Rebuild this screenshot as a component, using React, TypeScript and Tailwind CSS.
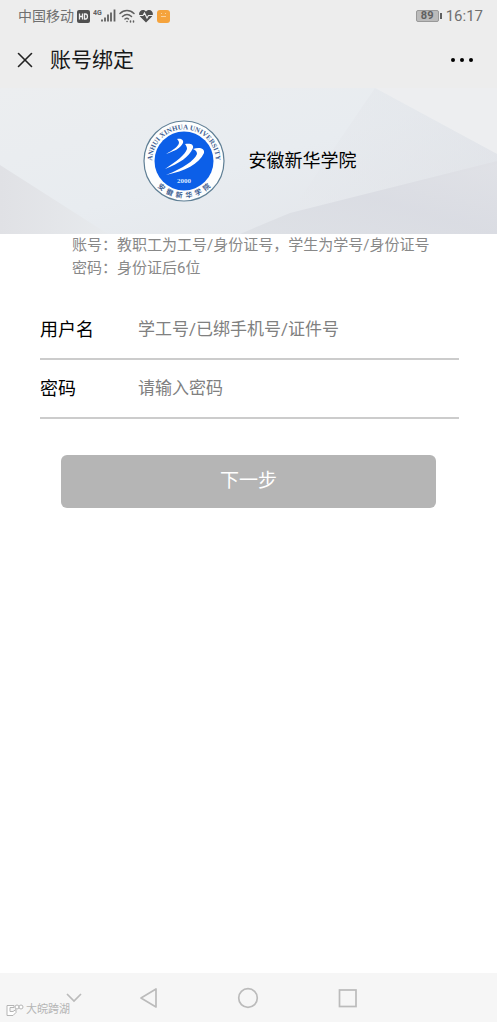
import React from 'react';
import { X } from 'lucide-react';

const fields = [
  { id: 'username', label: '用户名', type: 'text', placeholder: '学工号/已绑手机号/证件号' },
  { id: 'password', label: '密码', type: 'password', placeholder: '请输入密码' },
];

const StatusBar: React.FC = () => (
  <div className="flex h-8 items-center justify-between pl-[18px] pr-[14px] text-[#707070]">
    <div className="flex items-center gap-[3px]">
      <span className="text-sm">中国移动</span>
      <svg className="h-[13px] w-[13px]" viewBox="0 0 13 13">
        <rect width="13" height="13" rx="2" fill="#505050" />
        <path d="M2.5 3.5v6M5.5 3.5v6M2.5 6.5h3M7.5 4v5h1c2.6 0 2.6-5 0-5z" fill="none" stroke="#eee" strokeWidth="1.3" />
      </svg>
      <svg className="h-4 w-[23px]" viewBox="0 0 23 16">
        <text x="0" y="7" fontSize="7" fontWeight="700" fill="#606060">4G</text>
        <path d="M9 13.5v-2M12 13.5v-4M15 13.5v-7M18 13.5v-9M21.5 13.5v-12" stroke="#606060" strokeWidth="1.8" />
      </svg>
      <svg className="h-4 w-4" viewBox="0 0 16 16" fill="none" stroke="#606060" strokeWidth="1.5" strokeLinecap="round">
        <path d="M1 5.5c4-4 10-4 14 0M3.5 8.5c3-2.7 6-2.7 9 0M6 11c1.3-1 2.5-1 3.5 0" />
        <path d="M8 13.5h.1M11.5 13v1M14.5 13v1" />
      </svg>
      <svg className="h-4 w-4" viewBox="0 0 16 16">
        <path d="M8 14.5L2 8.5C-1 4.5 4-.5 8 3.500c4-4 9 1 6 5z" fill="#505050" />
        <path d="M1 7.500h4l1.500-2.500L9 10l1.500-2.500H15" fill="none" stroke="#eee" strokeWidth="1.2" />
      </svg>
      <svg className="h-[13px] w-[13px]" viewBox="0 0 13 13">
        <rect width="13" height="13" rx="3" fill="#f5a33c" />
        <path d="M4 3.500h1M8 3.500h1M4 6.500h5" stroke="#fbd19a" fill="none" />
      </svg>
    </div>
    <div className="flex items-center gap-1">
      <div className="flex items-center gap-px">
        <span className="flex h-3 w-[23px] items-center justify-center rounded-xs border border-[#999999] bg-[#bbbbbb] text-[11px] font-bold text-[#606060]">89</span>
        <span className="h-1.5 w-0.5 bg-[#606060]" />
      </div>
      <span className="text-[15px]">16:17</span>
    </div>
  </div>
);

const Logo: React.FC = () => (
  <svg className="h-[82px] w-[82px]" viewBox="0 0 82 82" role="img" aria-label="安徽新华学院">
    <defs>
      <path id="top-arc" d="M10.5 51a32 32 0 1 1 61 0" />
      <path id="bottom-arc" d="M4 41a37 37 0 0 0 74 0" />
    </defs>
    <circle cx="41" cy="41" r="40" fill="#fdfefe" stroke="#5f7f95" strokeWidth="1.2" />
    <circle cx="41" cy="41" r="29.5" fill="#0c5fe8" />
    <text fontFamily="Liberation Serif, serif" fontSize="7" fontWeight="700" fill="#3f5f91">
      <textPath href="#top-arc" startOffset="50%" textAnchor="middle">ANHUI XINHUA UNIVERSITY</textPath>
    </text>
    <text fontSize="7" fontWeight="700" fill="#3f5f91" className="whitespace-pre">
      <textPath href="#bottom-arc" startOffset="50%" textAnchor="middle">安  徽  新  华  学  院</textPath>
    </text>
    <path
      d="M34 19c4-1 7 1 6 4-3 6-9 8-17 11 7-4 12-7 13-11 0-2-1-3-2-4zM42 24c5-1 9 0 8 4-4 9-13 15-28 21 12-8 20-14 22-20 0-2-1-4-2-5zM50 29c6-2 12-1 11 4-5 11-19 18-38 22 17-7 28-14 31-21 0-3-2-4-4-5z"
      fill="#fff"
    />
    <text x="41" y="63" textAnchor="middle" fontFamily="Liberation Serif, serif" fontSize="7" fontWeight="700" fill="#dbe9ff">2000</text>
  </svg>
);

const Banner: React.FC = () => (
  <div className="relative h-[146px] overflow-hidden bg-[#e8ebef]">
    <svg className="absolute inset-0 h-full w-full" viewBox="0 0 497 146" preserveAspectRatio="none">
      <defs>
        <linearGradient id="base" x1="0" y1="0" x2="1" y2="1">
          <stop offset="0" stopColor="#eceef0" />
          <stop offset="0.5" stopColor="#e8ecf0" />
          <stop offset="1" stopColor="#e2e4e9" />
        </linearGradient>
        <linearGradient id="left" x1="0" y1="0" x2="1" y2="0">
          <stop offset="0" stopColor="#e0e1e5" />
          <stop offset="1" stopColor="#e7eaed" />
        </linearGradient>
        <linearGradient id="right" x1="1" y1="0" x2="0" y2="0">
          <stop offset="0" stopColor="#dfe1e6" />
          <stop offset="1" stopColor="#e6e9ed" />
        </linearGradient>
        <linearGradient id="corner" x1="0" y1="1" x2="1" y2="0">
          <stop offset="0" stopColor="#dcdfe4" />
          <stop offset="0.5" stopColor="#d8dae1" />
          <stop offset="1" stopColor="#dfe0e5" />
        </linearGradient>
      </defs>
      <path d="M0 0h497v146H0z" fill="url(#base)" />
      <path d="M0 77L108 146H0z" fill="url(#left)" />
      <path d="M375 0h122v66z" fill="#edeef0" />
      <path d="M375 0L497 66v10L290 125z" fill="url(#right)" opacity="0.5" />
      <path d="M497 73L290 125 240 146h257z" fill="url(#corner)" opacity="0.8" />
    </svg>
    <div className="relative flex h-full items-center justify-center gap-6 pl-0.5">
      <Logo />
      <h2 className="text-lg text-black">安徽新华学院</h2>
    </div>
  </div>
);

const NavBar: React.FC = () => (
  <nav className="relative grid h-[49px] grid-cols-5 bg-[#f6f6f6] text-[#bbbbbb]">
    <button aria-label="收起" className="flex items-center justify-end pr-3.5">
      <svg className="h-[22px] w-[22px]" viewBox="0 0 22 22" fill="none" stroke="currentColor" strokeWidth="1.7">
        <path d="M4 7l7 7 7-7" />
      </svg>
    </button>
    <button aria-label="返回" className="flex items-center justify-center">
      <svg className="h-[22px] w-[22px]" viewBox="0 0 22 22" fill="none" stroke="currentColor" strokeWidth="1.7" strokeLinejoin="round">
        <path d="M18 2v18L3 11z" />
      </svg>
    </button>
    <button aria-label="主页" className="flex items-center justify-center">
      <svg className="h-[22px] w-[22px]" viewBox="0 0 22 22" fill="none" stroke="currentColor" strokeWidth="1.7">
        <circle cx="11" cy="11" r="9.3" />
      </svg>
    </button>
    <button aria-label="最近" className="flex items-center justify-center">
      <svg className="h-[22px] w-[22px]" viewBox="0 0 22 22" fill="none" stroke="currentColor" strokeWidth="1.7">
        <rect x="2.500" y="3" width="16.500" height="16.500" />
      </svg>
    </button>
    <div className="absolute bottom-1.5 left-1.5 flex items-center gap-0.5">
      <svg className="h-3 w-[18px]" viewBox="0 0 18 12" fill="#fff" stroke="#b5b5b5">
        <path d="M1 1.500h7v2H4v4h3l3-2v3l-3 3H1z" />
        <circle cx="11" cy="3" r="2" />
        <circle cx="15" cy="3" r="2" />
      </svg>
      <span className="text-[11px] leading-3 text-[#b5b5b5]">大皖跨湖</span>
    </div>
  </nav>
);

export default function App() {
  return (
    <div className="flex min-h-screen flex-col bg-white font-['Roboto','Noto_Sans_CJK_SC',sans-serif]">
      <header className="bg-[#ededed]">
        <StatusBar />
        <div className="flex h-14 items-center pl-3 pr-6">
          <button aria-label="关闭">
            <X className="h-[26px] w-[26px] text-[#222222]" strokeWidth={1.5} />
          </button>
          <h1 className="ml-3 flex-1 pt-0.5 text-[21px] text-[#181818]">账号绑定</h1>
          <button aria-label="更多" className="flex gap-[5px]">
            <span className="h-1 w-1 rounded-full bg-black" />
            <span className="h-1 w-1 rounded-full bg-black" />
            <span className="h-1 w-1 rounded-full bg-black" />
          </button>
        </div>
      </header>
      <Banner />
      <main className="flex-1">
        <div className="pl-[72px] text-[15px] leading-[23px] text-[#888888]">
          <p>账号：教职工为工号/身份证号，学生为学号/身份证号</p>
          <p>密码：身份证后6位</p>
        </div>
        <form className="px-[38px] pt-[21px] sm:mx-auto sm:max-w-xl" onSubmit={(e) => e.preventDefault()}>
          {fields.map((field) => (
            <div key={field.id} className="ml-0.5 flex h-[59px] items-center border-b-2 border-[#cccccc]">
              <label htmlFor={field.id} className="w-[98px] text-lg text-black">
                {field.label}
              </label>
              <input
                id={field.id}
                type={field.type}
                placeholder={field.placeholder}
                className="min-w-0 flex-1 bg-transparent text-[17px] outline-none placeholder:text-[#808080]"
              />
            </div>
          ))}
          <div className="px-[23px] pt-9">
            <button type="submit" className="h-[53px] w-full rounded-md bg-[#b5b5b5] text-[19px] text-white">
              下一步
            </button>
          </div>
        </form>
      </main>
      <NavBar />
    </div>
  );
}
